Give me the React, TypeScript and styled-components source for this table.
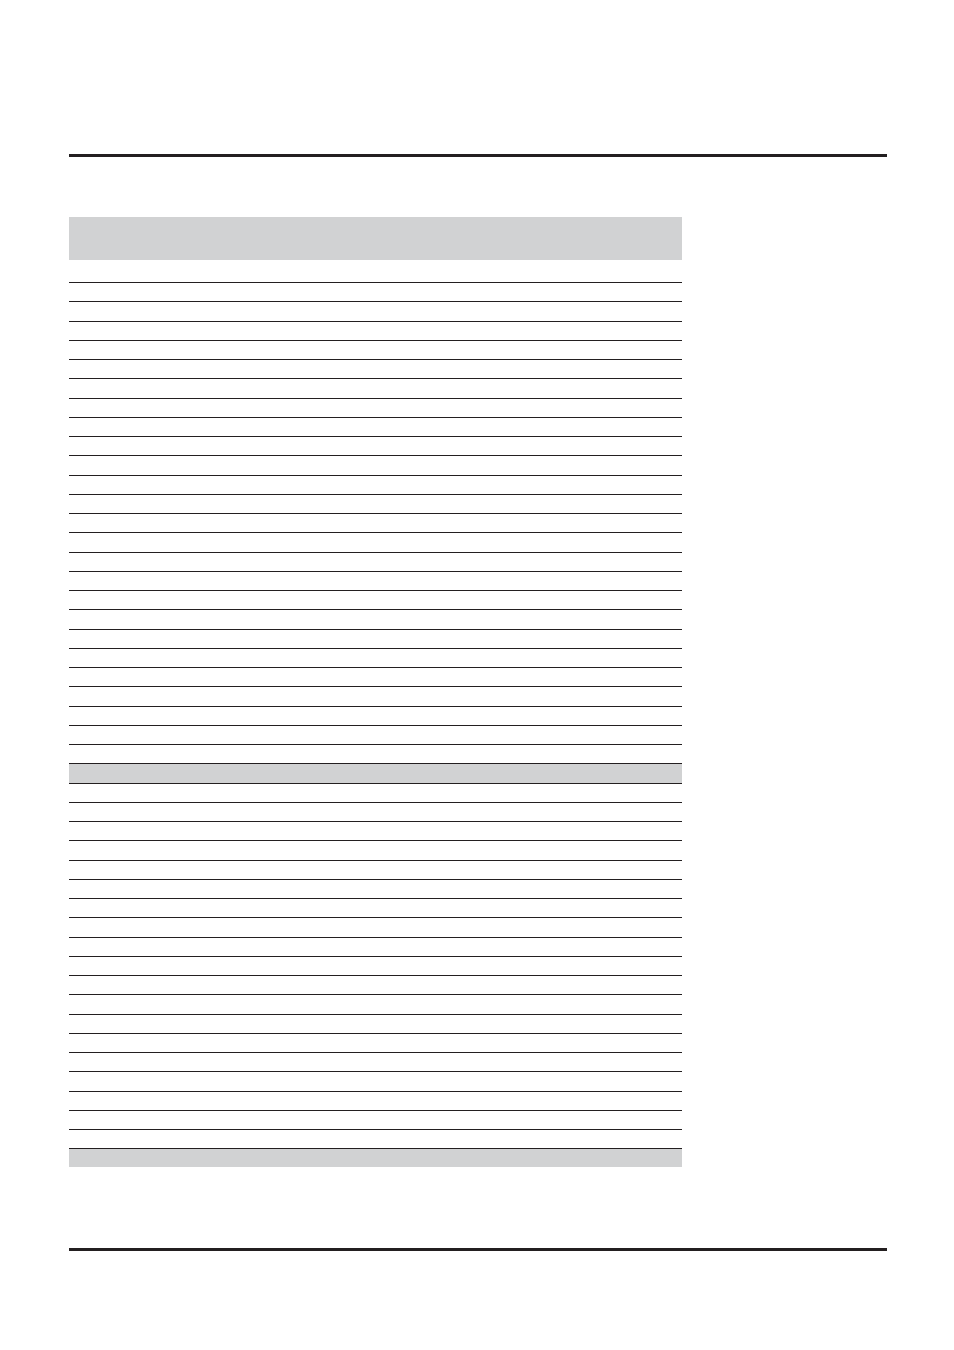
import React from 'react';
import styled, { createGlobalStyle } from 'styled-components';

const GlobalStyle = createGlobalStyle`
  html, body {
    margin: 0;
    padding: 0;
    background: #ffffff;
    font-family: "Liberation Sans", Arial, sans-serif;
  }
`;

// rows of the blank form: 25 body rows, a shaded subtotal row, 19 more rows
const upperRows = Array.from({ length: 25 }, (_, i) => i);
const lowerRows = Array.from({ length: 19 }, (_, i) => i);

export default function App() {
  return (
    <>
      <GlobalStyle />
      <Page>
        <Rule />
        <Table>
          <HeaderBand />
          <SpacerRow />
          {upperRows.map((i) => (
            <Row key={`u-${i}`} />
          ))}
          <Row shaded />
          {lowerRows.map((i) => (
            <Row key={`l-${i}`} />
          ))}
          <FooterBand />
        </Table>
        <BottomRule />
      </Page>
    </>
  );
}

const Page = styled.div`
  width: 954px;
  height: 1350px;
  box-sizing: border-box;
  padding: 154px 67px 0 69px;
  display: flex;
  flex-direction: column;
`;

const Rule = styled.div`
  height: 3px;
  background: #231f20;
  width: 818px;
`;

const BottomRule = styled(Rule)`
  margin-top: 81px;
`;

const Table = styled.div`
  margin-top: 60px;
  width: 613px;
  display: flex;
  flex-direction: column;
`;

const HeaderBand = styled.div`
  height: 43px;
  background: #d1d2d3;
`;

const SpacerRow = styled.div`
  height: 23px;
  box-sizing: border-box;
  border-bottom: 1px solid #231f20;
`;

const Row = styled.div<{ shaded?: boolean }>`
  height: 19.25px;
  box-sizing: border-box;
  border-bottom: 1px solid #231f20;
  background: ${(p) => (p.shaded ? '#d1d2d3' : 'transparent')};
`;

const FooterBand = styled.div`
  height: 18px;
  background: #d1d2d3;
`;
